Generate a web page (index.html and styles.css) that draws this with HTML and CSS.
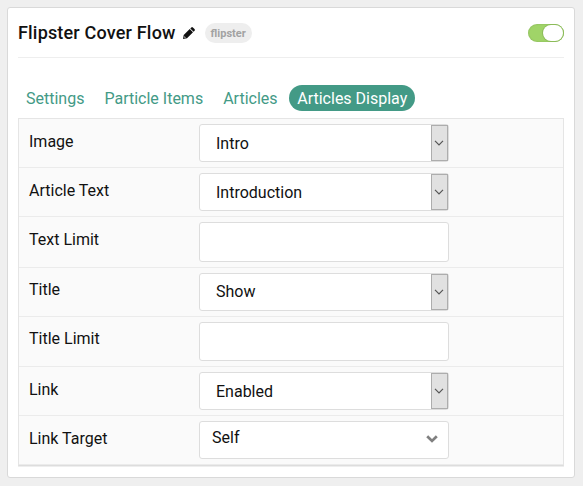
FILE: index.html
```
<!DOCTYPE html>
<html lang="en">
<head>
<meta charset="utf-8">
<title>Flipster Cover Flow</title>
<link rel="stylesheet" href="styles.css">
</head>
<body>
<main class="card">
  <header class="card-header">
    <h1 class="title">Flipster Cover Flow</h1>
    <svg class="pencil" viewBox="0 0 12 12" width="12" height="12"><path fill="#111" fill-rule="evenodd" d="M0 12 .7 8 6.7 2 10 5.3 4 11.3ZM1.5 9.2 1.2 10.3 1.8 10.8 2.9 10.5ZM7.3 1.4 8.3.4Q9.1-.2 9.9.5L11.5 2.1Q12.2 2.9 11.6 3.7L10.6 4.7Z"/></svg>
    <span class="badge">flipster</span>
    <span class="toggle"><span class="knob"></span></span>
  </header>
  <nav class="tabs">
    <a class="tab">Settings</a>
    <a class="tab">Particle Items</a>
    <a class="tab">Articles</a>
    <a class="tab active">Articles Display</a>
  </nav>
  <section class="panel">
    <div class="row"><span class="label">Image</span><div class="control select"><span class="value">Intro</span><span class="drop"><svg width="10" height="6" viewBox="0 0 10 6"><path d="M1 .8 5 4.8 9 .8"/></svg></span></div></div>
    <div class="row"><span class="label">Article Text</span><div class="control select"><span class="value">Introduction</span><span class="drop"><svg width="10" height="6" viewBox="0 0 10 6"><path d="M1 .8 5 4.8 9 .8"/></svg></span></div></div>
    <div class="row row-tall"><span class="label">Text Limit</span><div class="control input"></div></div>
    <div class="row row-raised"><span class="label">Title</span><div class="control select"><span class="value">Show</span><span class="drop"><svg width="10" height="6" viewBox="0 0 10 6"><path d="M1 .8 5 4.8 9 .8"/></svg></span></div></div>
    <div class="row row-mid row-raised"><span class="label">Title Limit</span><div class="control input"></div></div>
    <div class="row"><span class="label">Link</span><div class="control select"><span class="value">Enabled</span><span class="drop"><svg width="10" height="6" viewBox="0 0 10 6"><path d="M1 .8 5 4.8 9 .8"/></svg></span></div></div>
    <div class="row"><span class="label">Link Target</span><div class="control picker"><span class="value">Self</span><svg class="chevron" width="12" height="8" viewBox="0 0 12 8"><path d="M1.2 1.3 6 5.9 10.8 1.3"/></svg></div></div>
  </section>
</main>
</body>
</html>
```
FILE: styles.css
```
* { box-sizing: border-box; }
body {
  margin: 0;
  padding: 7px 8px 8px 7px;
  height: 486px;
  background: #efefef;
  color: #111;
  font: 16px/23px Roboto, "Liberation Sans", sans-serif;
}
.card {
  height: 471px;
  padding: 0 10px;
  background: #fff;
  border: 1px solid #d9d9d9;
  border-radius: 3px;
}
.card-header {
  display: flex;
  align-items: center;
  height: 50px;
  border-bottom: 1px solid #eee;
}
.title { margin: 0; font-size: 18px; font-weight: 500; line-height: 24px; letter-spacing: .18px; }
.pencil { margin: 1px 0 0 7px; }
.badge {
  height: 20px;
  margin-left: 10px;
  padding: 0 6px;
  border-radius: 10px;
  background: #eee;
  color: #a2a2a2;
  font-size: 11px;
  font-weight: 700;
  line-height: 21px;
}
.toggle {
  display: flex;
  justify-content: flex-end;
  width: 36px;
  height: 18px;
  margin-left: auto;
  padding: 1px;
  border-radius: 9px;
  background: #a0d468;
  box-shadow: inset 0 0 2px rgba(0, 0, 0, .2);
}
.knob { width: 20px; height: 16px; border-radius: 8px; background: #fff; box-shadow: 0 0 0 1px #8bbb59; }
.tabs { display: flex; gap: 4px; height: 60px; padding-top: 27px; }
.tab { height: 26px; padding: 0 8px; border-radius: 13px; color: #439a86; line-height: 27px; }
.active { margin-left: -1px; padding: 0 7.5px 0 8.7px; background: #439a86; color: #fff; }
.panel {
  background: #fafafa;
  border: 1px solid #e5e5e5;
  border-bottom-color: #ddd;
  box-shadow: 0 1px 0 #eee;
}
.row {
  display: flex;
  height: 49px;
  padding: 5px 10px 0;
  border-bottom: 1px solid #ebebeb;
}
.row-tall { height: 51px; }
.row-mid { height: 50px; }
.label { width: 170px; padding-top: 6px; }
.row-raised .label { padding-top: 5px; }
.control {
  display: flex;
  justify-content: space-between;
  width: 250px;
  height: 38px;
  background: #fff;
  border: 1px solid #ddd;
  border-radius: 3px;
}
.row-tall .control { height: 40px; }
.row-mid .control { height: 39px; }
.select .value { padding: 7px 0 0 16px; }
.row-raised .value { padding-top: 6px; }
.drop {
  display: flex;
  align-items: center;
  justify-content: center;
  width: 17px;
  padding: 0 1px 1px 0;
  background: #e1e1e1;
  border: 1px solid #adadad;
}
.drop path { fill: none; stroke: #555; stroke-width: 1.2; }
.picker { padding: 4px 10px 0 12px; }
.chevron { margin-top: 9px; }
.chevron path { fill: none; stroke: #808080; stroke-width: 2.8; }
```
